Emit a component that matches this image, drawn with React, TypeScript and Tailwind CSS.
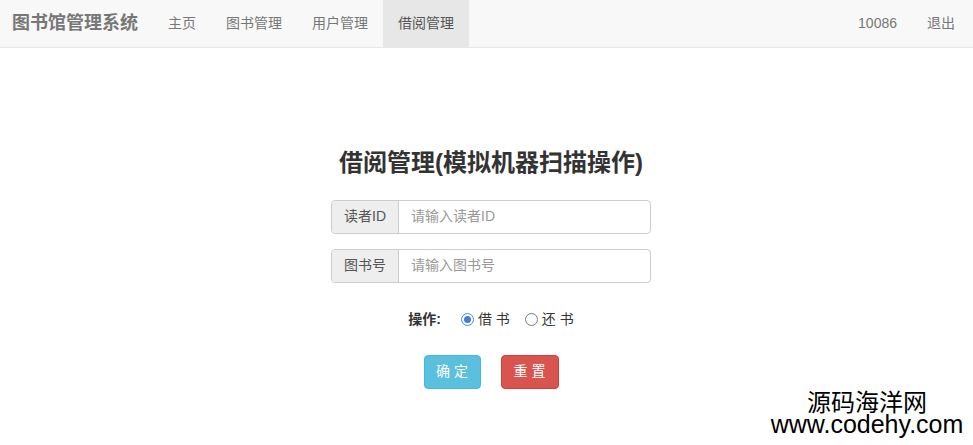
import React from "react";

const font = { fontFamily: '"Liberation Sans", "Noto Sans CJK SC", sans-serif' };

function Radio({ checked }: { checked?: boolean }) {
  return checked ? (
    <span className="inline-flex h-[13px] w-[13px] items-center justify-center rounded-full border border-[#4a88d8] bg-white">
      <span className="h-[7px] w-[7px] rounded-full bg-[#3f7fd6]" />
    </span>
  ) : (
    <span className="inline-block h-[13px] w-[13px] rounded-full border border-[#7a7a7a] bg-white" />
  );
}

export default function App() {
  return (
    <div className="relative h-[445px] w-[973px] overflow-hidden bg-white text-[14px] text-[#333]" style={font}>
      <nav className="flex h-[48px] items-stretch border-b border-[#e7e7e7] bg-[#f8f8f8]">
        <div className="flex items-center pl-[12px] pr-[15px] text-[18px] font-bold text-[#777]">图书馆管理系统</div>
        <ul className="flex items-stretch text-[#777]">
          <li className="flex items-center px-[15px]">主页</li>
          <li className="flex items-center px-[15px]">图书管理</li>
          <li className="flex items-center px-[15px]">用户管理</li>
          <li className="flex items-center bg-[#e7e7e7] px-[15px] text-[#555]">借阅管理</li>
        </ul>
        <ul className="ml-auto flex items-stretch pr-[3px] text-[#777]">
          <li className="flex items-center px-[15px]">10086</li>
          <li className="flex items-center px-[15px]">退出</li>
        </ul>
      </nav>

      <main className="flex flex-col items-center pl-[9px] pt-[101px]">
        <h2 className="text-[24px] font-bold leading-[1.15] text-[#333]">借阅管理(模拟机器扫描操作)</h2>

        <div className="mt-[23px] flex h-[34px] w-[320px] rounded-[4px] border border-[#ccc]">
          <span className="flex w-[67px] items-center justify-center rounded-l-[4px] border-r border-[#ccc] bg-[#eee] text-[#555]">读者ID</span>
          <span className="flex flex-1 items-center px-[12px] text-[#999]">请输入读者ID</span>
        </div>
        <div className="mt-[15px] flex h-[34px] w-[320px] rounded-[4px] border border-[#ccc]">
          <span className="flex w-[67px] items-center justify-center rounded-l-[4px] border-r border-[#ccc] bg-[#eee] text-[#555]">图书号</span>
          <span className="flex flex-1 items-center px-[12px] text-[#999]">请输入图书号</span>
        </div>

        <div className="mt-[27px] flex h-[20px] items-center">
          <span className="font-bold">操作:</span>
          <span className="ml-[20px] flex items-center gap-[4px]">
            <Radio checked />
            <span>借 书</span>
          </span>
          <span className="ml-[15px] flex items-center gap-[4px]">
            <Radio />
            <span>还 书</span>
          </span>
        </div>

        <div className="mt-[25px] flex gap-[20px]">
          <button className="h-[34px] w-[57px] rounded-[4px] border border-[#46b8da] bg-[#5bc0de] text-white">确 定</button>
          <button className="h-[34px] w-[58px] rounded-[4px] border border-[#d43f3a] bg-[#d9534f] text-white">重 置</button>
        </div>
      </main>

      <div className="absolute left-[766px] top-[389px] flex w-[202px] flex-col items-center leading-none text-black">
        <span className="text-[24px]" style={{ fontFamily: '"Noto Sans CJK SC", sans-serif' }}>源码海洋网</span>
        <span className="mt-[-1px] text-[25px]" style={{ fontFamily: '"Liberation Sans", sans-serif' }}>www.codehy.com</span>
      </div>
    </div>
  );
}
